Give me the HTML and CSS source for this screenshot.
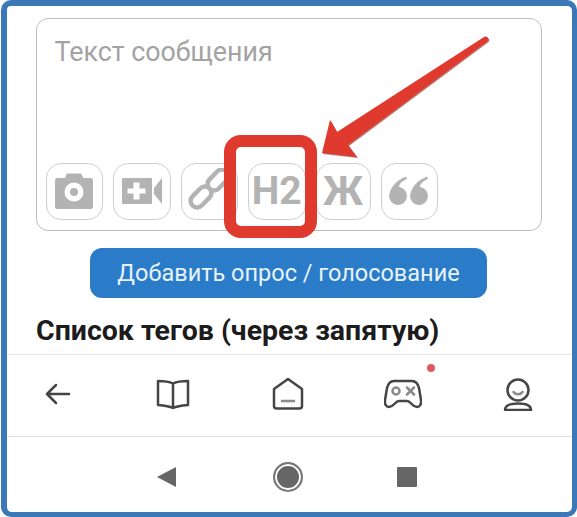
FILE: index.html
```html
<!DOCTYPE html>
<html lang="ru">
<head>
  <meta charset="UTF-8">
  <meta name="viewport" content="width=device-width, initial-scale=1.0">
  <title>Текст сообщения</title>
  <link rel="stylesheet" href="styles.css">
</head>
<body>
  <div class="frame">
    <div class="editor">
      <div class="placeholder">Текст сообщения</div>
      <div class="tools">
        <div class="tool">
          <svg width="42" height="42" viewBox="0 0 42 42">
            <path class="fill" fill-rule="evenodd" d="M14 3.500h14l2.500 4.500h7a2.500 2.500 0 0 1 2.500 2.500v26a2.500 2.500 0 0 1-2.500 2.500h-33a2.500 2.500 0 0 1-2.500-2.500v-26a2.500 2.500 0 0 1 2.500-2.500h7.500zM21 12.500a9.500 9.500 0 1 0 0 19 9.500 9.500 0 0 0 0-19z"/>
            <circle class="fill" cx="21" cy="22" r="4"/>
          </svg>
        </div>
        <div class="tool">
          <svg width="42" height="42" viewBox="0 0 42 42">
            <path class="fill" fill-rule="evenodd" d="M2 8h28a1 1 0 0 1 1 1v24a1 1 0 0 1-1 1h-28a1 1 0 0 1-1-1v-24a1 1 0 0 1 1-1zM12.500 12.500v6h-6v5h6v6h6v-6h6v-5h-6v-6z"/>
            <path class="fill" d="M33 18l8-10v26l-8-10z"/>
          </svg>
        </div>
        <div class="tool">
          <svg width="46" height="46" viewBox="0 0 46 46">
            <rect class="stroke" x="3" y="22.500" width="24" height="13" rx="6.500" transform="rotate(-45 15 29)"/>
            <rect class="stroke" x="20" y="5.500" width="24" height="13" rx="6.500" transform="rotate(-45 32 12)"/>
          </svg>
        </div>
        <div class="tool tool-text">H2</div>
        <div class="tool tool-text tool-narrow">Ж</div>
        <div class="tool">
          <svg width="44" height="30" viewBox="0 0 44 30">
            <path class="fill" d="M19 .5C10 4 3 11 2 20a9 9 0 1 0 10-9c0-3 3-6 8-8z"/>
            <path class="fill" d="M40 .5C31 4 24 11 23 20a9 9 0 1 0 10-9c0-3 3-6 8-8z"/>
          </svg>
        </div>
      </div>
    </div>

    <button class="poll-btn">Добавить опрос / голосование</button>
    <h2 class="tags-title">Список тегов (через запятую)</h2>

    <nav class="bottom-nav">
      <svg class="nav-icon" width="28" height="28" viewBox="0 0 28 28">
        <path d="M25 14h-22M12 5l-9 9 9 9"/>
      </svg>
      <svg class="nav-icon" width="34" height="32" viewBox="0 0 34 32">
        <path d="M17 5.500c-3-1.500-9-2.500-15-2.500v24c6 .5 12 1.500 15 3 3-1.500 9-2.500 15-3v-24c-6 0-12 1-15 2.500zM17 5.500v24.500"/>
      </svg>
      <svg class="nav-icon" width="32" height="34" viewBox="0 0 32 34">
        <path d="M2 12l14-10 14 10v17a2.500 2.500 0 0 1-2.500 2.500h-23a2.500 2.500 0 0 1-2.500-2.500z"/>
        <path class="nav-dash" d="M10 24h12"/>
      </svg>
      <div class="game">
        <svg class="nav-icon" width="38" height="32" viewBox="0 0 38 32">
          <path d="M10 3h18c4 0 6 3 7 7l2 12c.5 4-1 7-4 7-5 0-6-6-10-6h-8c-4 0-5 6-10 6-3 0-4.500-3-4-7l2-12c1-4 3-7 7-7z"/>
          <circle class="nav-dash" cx="12" cy="13" r="3.500"/>
          <path class="nav-dash" d="M23 9.500l7 7M30 9.500l-7 7"/>
        </svg>
        <span class="dot"></span>
      </div>
      <svg class="nav-icon" width="30" height="33" viewBox="0 0 30 33">
        <circle cx="15" cy="12" r="10.500"/>
        <path class="nav-dash" d="M10.500 14c2 3 7 3 9 0"/>
        <path d="M2 32c0-5 6-6.500 13-6.500s13 1.500 13 6.500z"/>
      </svg>
    </nav>

    <div class="system-bar">
      <span class="sys-back"></span>
      <span class="sys-home"></span>
      <span class="sys-recent"></span>
    </div>

    <div class="mark-box"></div>
    <svg class="mark-arrow" width="180" height="130" viewBox="0 0 180 130">
      <path class="arrow-body" d="M1 118L9 85 16 97 163 2a2.500 2.500 0 0 1 3 4.500L27 110 36 122z"/>
    </svg>
  </div>
</body>
</html>
```

FILE: styles.css
```css
* {
  margin: 0;
  padding: 0;
  box-sizing: border-box;
}

body {
  font-family: Roboto, "Liberation Sans", sans-serif;
  background: #fff;
  width: 577px;
  height: 517px;
  overflow: hidden;
}

.frame {
  position: relative;
  width: 576px;
  height: 517px;
  margin-left: 1px;
  background: #fff;
  border: 5px solid #3b78b7;
  border-top-width: 6px;
  border-left-width: 6px;
  border-radius: 10px;
  display: flex;
  flex-direction: column;
}

.editor {
  width: 506px;
  height: 213px;
  margin: 12px 0 0 29px;
  border: 1.5px solid #bdbdbd;
  border-radius: 12px;
  display: flex;
  flex-direction: column;
  justify-content: space-between;
  padding: 17px 8.5px 10px;
}

.placeholder {
  padding-left: 9px;
  font-size: 26.8px;
  line-height: 32px;
  color: #a3a3a3;
}

.tools {
  display: flex;
  gap: 10px;
}

.tool {
  width: 57.5px;
  height: 57.5px;
  border: 1.5px solid #cfcfcf;
  border-radius: 15px;
  display: flex;
  align-items: center;
  justify-content: center;
  color: #b3b3b3;
}

.tool svg {
  flex: none;
}

.tool-text {
  font-size: 39px;
  font-weight: 700;
}

.tool-narrow {
  width: 55px;
  font-size: 40px;
}

.fill {
  fill: #b3b3b3;
}

.stroke {
  fill: none;
  stroke: #b3b3b3;
  stroke-width: 4.5px;
}

.poll-btn {
  width: 397px;
  height: 50px;
  margin: 17px 0 0 83px;
  border: none;
  border-radius: 12px;
  background: #2a7cc9;
  color: #e8f2fb;
  font-family: inherit;
  font-size: 23.5px;
}

.tags-title {
  margin: 17px 0 0 29px;
  font-size: 28.5px;
  line-height: 32px;
  font-weight: 700;
  color: #1c1c1c;
}

.bottom-nav {
  height: 83px;
  margin-top: 7px;
  border-top: 1px solid #e6e6e6;
  border-bottom: 1.5px solid #e2e2e2;
  display: grid;
  grid-template-columns: repeat(5, 115px);
  justify-content: center;
  align-items: center;
  justify-items: center;
  padding: 0 3px 3px 0;
}

.nav-icon {
  fill: none;
  stroke: #454545;
  stroke-width: 2.5px;
  stroke-linecap: round;
  stroke-linejoin: round;
}

.nav-dash {
  stroke: #8a8a8a;
}

.game {
  position: relative;
  display: flex;
}

.dot {
  position: absolute;
  top: -14px;
  right: -13px;
  width: 8px;
  height: 8px;
  border-radius: 50%;
  background: #dc5a5e;
}

.system-bar {
  flex: 1;
  display: flex;
  align-items: center;
  padding: 4px 0 0 150px;
}

.sys-back {
  width: 0;
  height: 0;
  border-top: 10.5px solid transparent;
  border-bottom: 10.5px solid transparent;
  border-right: 19px solid #666;
}

.sys-home {
  width: 30px;
  height: 30px;
  margin: 0 94px 0 97px;
  border-radius: 50%;
  border: 2px solid #777;
  background: #666;
  box-shadow: inset 0 0 0 2px #fff;
}

.sys-recent {
  width: 20px;
  height: 20px;
  background: #666;
  border-radius: 1px;
}

.mark-box {
  position: absolute;
  left: 217px;
  top: 129px;
  width: 93px;
  height: 103px;
  border: 12px solid #e03a2e;
  border-radius: 17px;
}

.mark-arrow {
  position: absolute;
  left: 314px;
  top: 29px;
  filter: drop-shadow(1px 1px 0 #b8776e);
}

.arrow-body {
  fill: #e03a2e;
}
```
